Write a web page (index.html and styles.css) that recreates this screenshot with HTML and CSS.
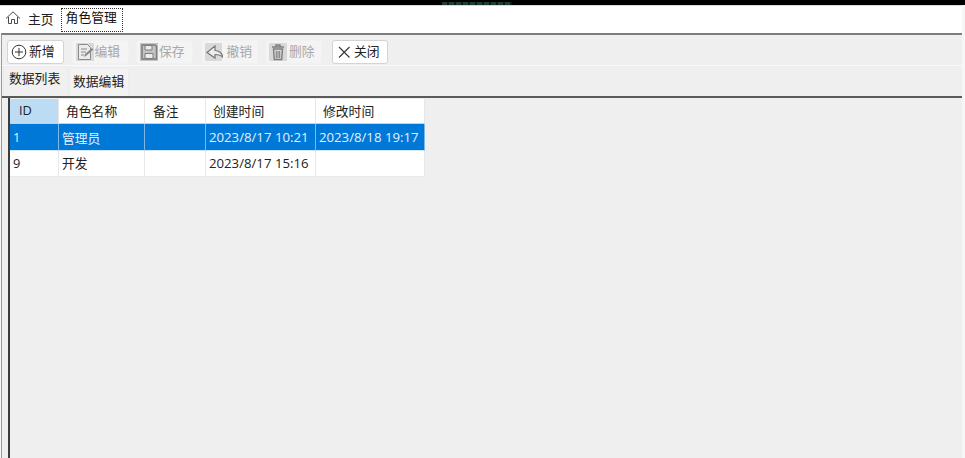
FILE: index.html
```html
<!DOCTYPE html>
<html lang="zh-CN">
<head>
<meta charset="utf-8">
<title>角色管理</title>
<link rel="stylesheet" href="styles.css">
</head>
<body>
<div class="app">
  <div class="topbar"><span class="topbar-mark"></span></div>
  <nav class="pagetabs">
    <div class="pagetab">
      <svg class="home-icon" width="16" height="16" viewBox="0 0 16 16" fill="none" stroke="#4a4a4a" stroke-width="1"><path d="M1 8.500 8 1.800l7 6.700M3.500 7v6.500h3v-4h3v4h3V7"/></svg>
      <span>主页</span>
    </div>
    <div class="pagetab active"><span>角色管理</span></div>
  </nav>
  <div class="main">
    <div class="toolbar">
      <button class="tbtn">
        <svg width="16" height="16" viewBox="0 0 16 16" fill="none" stroke="#333" stroke-width="1"><circle cx="8" cy="8" r="6.800"/><path d="M8 4v8M4 8h8"/></svg>
        <span>新增</span>
      </button>
      <button class="tbtn off">
        <svg width="18" height="18" viewBox="0 0 18 18"><rect width="18" height="18" fill="#d9d9d9"/><path d="M2.500 1.500h9l3 3v12h-12z" fill="#ececec" stroke="#8a8a8a"/><path d="M5 6h6M5 9h5M5 12h3" stroke="#8a8a8a"/><path d="M8 14l1-3 7-6 1.500 1.500-7 6z" fill="#8a8a8a"/></svg>
        <span>编辑</span>
      </button>
      <button class="tbtn off">
        <svg width="18" height="18" viewBox="0 0 18 18"><rect width="18" height="18" fill="#c4c4c4"/><path d="M2 2h13l1.500 1.500V16H2z" fill="#c4c4c4" stroke="#7d7d7d" stroke-width="1.500"/><path d="M5 2.500h7v4.500H5zM5 10.500h8v5H5z" fill="#ececec" stroke="#7d7d7d"/></svg>
        <span>保存</span>
      </button>
      <button class="tbtn off wide">
        <svg width="18" height="18" viewBox="0 0 18 18"><rect width="17" height="18" fill="#d9d9d9"/><path d="M10 3 2 9.500 10 15v-3.500c3 0 6 .5 8 3-.5-4-4-7-8-7z" fill="#eee" stroke="#777" stroke-width="1.200"/></svg>
        <span>撤销</span>
      </button>
      <button class="tbtn off mid">
        <svg width="18" height="18" viewBox="0 0 18 18"><rect width="18" height="18" fill="#d9d9d9"/><path d="M3 4h12M7 4V2h4v2M4.500 6h9l-.8 10.500H5.300z" fill="none" stroke="#7d7d7d" stroke-width="1.400"/><path d="M7.300 8v7M9 8v7M10.700 8v7" stroke="#7d7d7d"/></svg>
        <span>删除</span>
      </button>
      <button class="tbtn close">
        <svg width="14" height="14" viewBox="0 0 14 14" fill="none" stroke="#333" stroke-width="1.100"><path d="M2 2l10.500 10.500M12.500 2 2 12.500"/></svg>
        <span>关闭</span>
      </button>
    </div>
    <div class="subtabs">
      <div class="subtab active">数据列表</div>
      <div class="subtab">数据编辑</div>
    </div>
    <div class="panel">
      <table class="grid">
        <colgroup>
          <col class="c-id"><col class="c-name"><col class="c-note"><col class="c-time"><col class="c-time2">
        </colgroup>
        <thead>
          <tr><th class="sel">ID</th><th>角色名称</th><th>备注</th><th>创建时间</th><th>修改时间</th></tr>
        </thead>
        <tbody>
          <tr class="selected row-a"><td>1</td><td>管理员</td><td></td><td class="time">2023/8/17 10:21</td><td class="time">2023/8/18 19:17</td></tr>
          <tr class="row-b"><td>9</td><td>开发</td><td></td><td class="time">2023/8/17 15:16</td><td></td></tr>
        </tbody>
      </table>
    </div>
  </div>
</div>
</body>
</html>
```

FILE: styles.css
```css
* { box-sizing: border-box; }
html, body { margin: 0; height: 100%; overflow: hidden; background: #f6f6f6; }
body { font-family: "Open Sans", "Noto Sans CJK SC", sans-serif; font-size: 12.8px; color: #222; }
.app { height: 458px; display: flex; flex-direction: column; }
.topbar { height: 5px; background: #000; display: flex; padding-left: 442px; align-items: flex-end; flex: none; }
.topbar-mark { width: 70px; height: 3px; background: repeating-linear-gradient(90deg, #1f3f33 0 5px, #0c1a15 5px 7px); }
.pagetabs { height: 28px; flex: none; background: #fff; border-top: 1px solid #d8d8d8; display: flex; align-items: flex-start; gap: 7px; padding-left: 5px; margin-right: 3px; }
.pagetab { display: flex; align-items: center; gap: 7px; height: 24px; }
.pagetab.active { border: 1px dotted #333; padding: 0 0 8px 4px; width: 62px; background: #fff; height: 24px; margin-top: 2px; color: #111; }
.main { flex: 1; display: flex; flex-direction: column; margin-left: 1px; margin-right: 3px; border-left: 1px solid #9a9a9a; border-top: 2px solid #7d7d7d; background: #efefef; min-height: 0; }
.toolbar { height: 31px; flex: none; display: flex; align-items: center; gap: 7.5px; padding: 3px 0 0 5px; border-bottom: 1px solid #fafafa; }
.tbtn { height: 24px; width: 57px; display: flex; align-items: center; gap: 2px; padding: 0 0 0 3px; border: 1px solid #d4d4d4; border-radius: 3px; background: #fff; font: inherit; color: #222; }
.tbtn span { padding-bottom: 2px; }
.tbtn.off { background: #f4f4f4; border-color: #f1f1f1; color: #a8a8a8; padding: 0 0 0 3px; gap: 1px; }
.tbtn.off.wide { gap: 4px; }
.tbtn.off.mid { gap: 2px; }
.tbtn svg { flex: none; }
.tbtn.close { gap: 3px; width: 56px; padding: 0 0 0 4px; margin-left: 2.500px; }
.subtabs { height: 32px; flex: none; display: flex; align-items: flex-end; padding-left: 1px; border-bottom: 2px solid #5a5a5a; }
.subtab { height: 28px; width: 60px; padding: 0 0 0 3px; line-height: 24px; background: #f3f3f3; border: 1px solid #ececec; border-bottom: none; }
.subtab.active { height: 30px; width: 65px; line-height: 22px; padding: 0 0 0 5px; background: #f0f0f0; margin-right: 1px; }
.panel { flex: 1; margin-left: 6px; border-left: 2px solid #3c3c3c; background: #efefef; min-height: 0; }
.grid { border-collapse: separate; border-spacing: 0; table-layout: fixed; width: 415px; margin-top: 1px; }
.c-id { width: 49px; }
.c-name { width: 86px; }
.c-note { width: 61px; }
.c-time { width: 110px; }
.c-time2 { width: 109px; }
.grid th { height: 25px; font-weight: 400; text-align: left; padding: 0 0 2px 7px; background: #fff; border-right: 1px solid #e6e6e6; border-bottom: 1px solid #cfcfcf; }
.grid th:nth-child(3) { padding-left: 8px; }
.grid th.sel { background: #bcdcf4; padding-left: 9px; }
.grid td { padding: 0 0 2px 3px; background: #fff; border-right: 1px solid #e9e9e9; border-bottom: 1px solid #e9e9e9; white-space: nowrap; overflow: hidden; }
.row-a td { height: 27px; padding-bottom: 0; }
.row-b td { height: 26px; }
.grid td.time { font-size: 13.200px; }
.grid tr.selected td { background: #0078d7; color: #e6f1fa; border-right-color: #7fb8e6; border-bottom-color: #d4e6f5; }
```
